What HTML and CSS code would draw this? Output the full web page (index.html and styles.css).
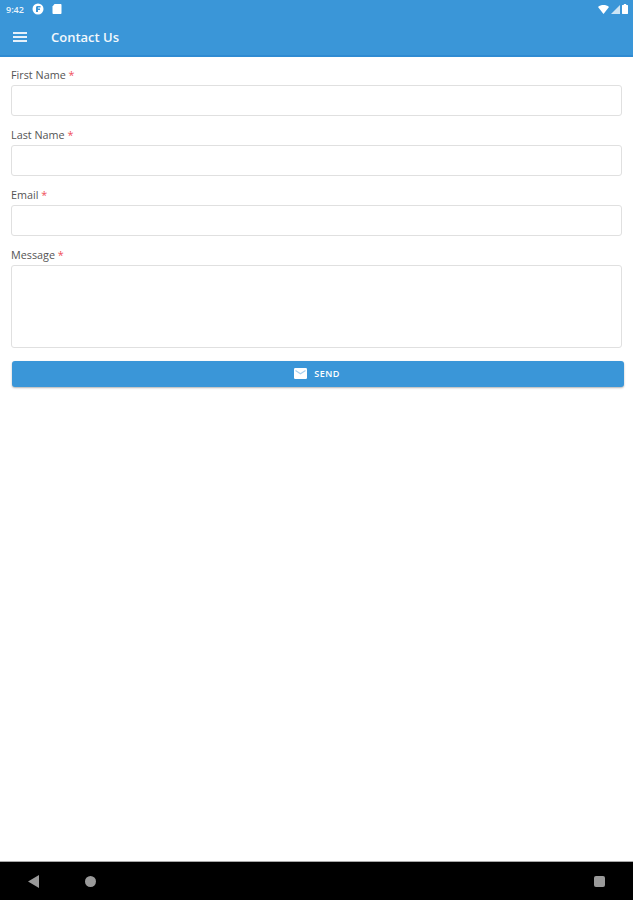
FILE: index.html
```html
<!DOCTYPE html>
<html lang="en">
<head>
  <meta charset="UTF-8" />
  <meta name="viewport" content="width=device-width, initial-scale=1.0"/>
  <title>Contact Us</title>
  <link rel="stylesheet" href="styles.css">
</head>
<body>

  <div class="header">
    <div class="status-bar">
      <span class="clock">9:42</span>
      <svg class="status-icon" width="12" height="12" viewBox="0 0 12 12">
        <circle cx="6" cy="6" r="5.5" fill="#ffffff"/>
        <path d="M4 9V4.5C4 3.6 4.6 3 5.5 3H8.5V4.6H6V5.6H8V7H6V9Z" fill="#3a96d8"/>
      </svg>
      <svg class="status-icon" width="10" height="12" viewBox="0 0 10 12">
        <path d="M2.5 1H8.5C9 1 9.5 1.4 9.5 2V10C9.5 10.6 9 11 8.5 11H1.5C1 11 .5 10.6 .5 10V3.5Z" fill="#ffffff"/>
      </svg>
      <span class="status-right">
        <svg width="11" height="9" viewBox="0 0 11 9"><path d="M0 2C3 -.6 8 -.6 11 2L5.500 9Z" fill="#ffffff"/></svg>
        <svg width="9" height="9" viewBox="0 0 9 9"><path d="M9 0V9H0Z" fill="#ffffff" opacity="0.75"/></svg>
        <svg width="6" height="10" viewBox="0 0 6 10"><path d="M1.800 0H4.200V1H5.500C5.800 1 6 1.200 6 1.500V9.500C6 9.800 5.800 10 5.500 10H.5C.2 10 0 9.800 0 9.500V1.500C0 1.200 .2 1 .5 1H1.800Z" fill="#ffffff"/></svg>
      </span>
    </div>
    <div class="toolbar">
      <svg class="menu-icon" width="14" height="10" viewBox="0 0 14 10">
        <path d="M0 0H14V2H0ZM0 4H14V6H0ZM0 8H14V10H0Z" fill="#e6f1fa"/>
      </svg>
      <span class="toolbar-title">Contact Us</span>
    </div>
  </div>

  <div class="contact-form">
    <div class="field">
      <label class="field-label">First Name <span class="required">*</span></label>
      <div class="input-box"></div>
    </div>
    <div class="field">
      <label class="field-label">Last Name <span class="required">*</span></label>
      <div class="input-box"></div>
    </div>
    <div class="field">
      <label class="field-label">Email <span class="required">*</span></label>
      <div class="input-box"></div>
    </div>
    <div class="field">
      <label class="field-label">Message <span class="required">*</span></label>
      <div class="input-box message-box"></div>
    </div>
    <div class="send-button">
      <svg width="13" height="11" viewBox="0 0 13 11">
        <rect width="13" height="11" rx="1.200" fill="#ffffff"/>
        <path d="M1.500 2.500L6.500 5.800L11.500 2.500" fill="none" stroke="#a9d0ee" stroke-width="1.100"/>
      </svg>
      <span>SEND</span>
    </div>
  </div>

  <div class="nav-bar">
    <svg class="nav-back" width="11" height="13" viewBox="0 0 11 13"><path d="M11 0V13L0 6.500Z" fill="#9a9a9a"/></svg>
    <span class="nav-home"></span>
    <span class="nav-recent"></span>
  </div>

</body>
</html>
```

FILE: styles.css
```css
html, body {
  height: 100%;
}

body {
  font-family: 'Open Sans', sans-serif;
  background-color: #ffffff;
  margin: 0;
  padding: 0;
  display: flex;
  flex-direction: column;
  overflow: hidden;
}

/* Header style */
.header {
  height: 55px;
  background-color: #3a96d8;
  border-bottom: 2px solid #2f8bd2;
  color: #ffffff;
}

.status-bar {
  height: 18px;
  display: flex;
  align-items: center;
  gap: 8px;
  padding: 0 5px 0 6px;
}

.clock {
  font-size: 9px;
  font-weight: 600;
  color: #eaf4fb;
}

.status-right {
  margin-left: auto;
  display: flex;
  align-items: center;
  gap: 2px;
}

.toolbar {
  height: 37px;
  display: flex;
  align-items: center;
  padding-left: 13px;
  padding-top: 1px;
  box-sizing: border-box;
}

.toolbar-title {
  margin-left: 24px;
  font-size: 13px;
  font-weight: 600;
  color: #f2f8fc;
}

.contact-form {
  flex: 1;
  padding: 10px 11px 0 11px;
}

.field {
  margin-bottom: 11px;
}

.field-label {
  display: block;
  height: 18px;
  line-height: 15px;
  font-size: 10.8px;
  color: #555555;
}

.required {
  color: #f0505a;
}

.input-box {
  height: 29px;
  border: 1px solid #e0e0e0;
  border-radius: 3px;
  background: #ffffff;
}

.message-box {
  height: 81px;
}

.send-button {
  height: 26px;
  box-sizing: border-box;
  padding: 0 2px 2px 0;
  margin: 13px -2px 0 1px;
  display: flex;
  align-items: center;
  justify-content: center;
  gap: 7px;
  background-color: #3a96d8;
  border-radius: 3px;
  box-shadow: 0px 1px 2px rgba(0, 0, 0, 0.3);
  color: #ffffff;
  font-size: 9px;
  font-weight: 600;
  letter-spacing: 0.5px;
}

.nav-bar {
  height: 38px;
  flex-shrink: 0;
  position: relative;
  background-color: #000000;
  border-top: 1px solid #a8a8a8;
}

.nav-back {
  position: absolute;
  left: 28px;
  top: 13px;
}

.nav-home {
  position: absolute;
  left: 85px;
  top: 14px;
  width: 11px;
  height: 11px;
  border-radius: 50%;
  background: #9a9a9a;
}

.nav-recent {
  position: absolute;
  left: 594px;
  top: 14px;
  width: 11px;
  height: 11px;
  border-radius: 2px;
  background: #9a9a9a;
}
```
